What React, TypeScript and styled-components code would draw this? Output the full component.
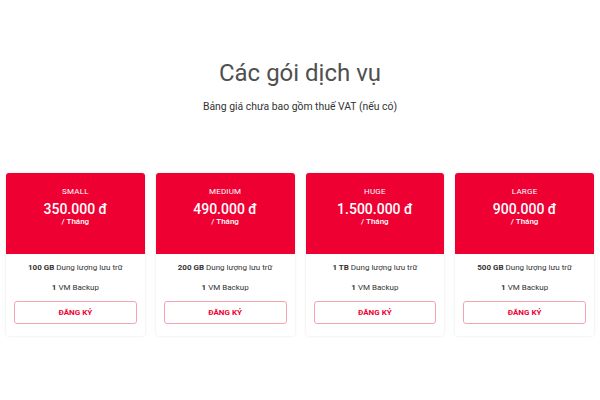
import React, { FC } from 'react';
import styled, { createGlobalStyle } from 'styled-components';

const GlobalStyle = createGlobalStyle`
    html, body {
        margin: 0;
        padding: 0;
        background: #ffffff;
        font-family: Roboto, 'Liberation Sans', sans-serif;
    }
    * {
        box-sizing: border-box;
    }
`;

const Page = styled.div`
    width: 600px;
    height: 400px;
    padding: 0 6px;
    display: flex;
    flex-direction: column;
    align-items: center;
`;

const Title = styled.h1`
    margin: 57px 0 0 0;
    font-size: 24px;
    line-height: 32px;
    font-weight: 400;
    color: #505050;
`;

const SubTitle = styled.p`
    margin: 11px 0 0 0;
    font-size: 10.4px;
    line-height: 14px;
    color: #333333;
`;

const Grid = styled.div`
    width: 100%;
    margin-top: 59px;
    display: grid;
    grid-template-columns: repeat(4, 1fr);
    gap: 11px;
`;

const Card = styled.div`
    background: #ffffff;
    border-radius: 3px;
    overflow: hidden;
    box-shadow: 0 0 3px rgba(0, 0, 0, 0.1);
    display: flex;
    flex-direction: column;
`;

const CardHead = styled.div`
    height: 81px;
    background: #ee0033;
    color: #ffffff;
    display: flex;
    flex-direction: column;
    align-items: center;
    padding-top: 14px;
`;

const PlanName = styled.span`
    font-size: 8px;
    line-height: 10px;
    letter-spacing: 0.2px;
`;

const Price = styled.span`
    margin-top: 4px;
    font-size: 14px;
    line-height: 16px;
    font-weight: 500;
`;

const Period = styled.span`
    font-size: 8px;
    line-height: 10px;
    font-weight: 500;
`;

const CardBody = styled.div`
    padding: 9px 8px 12px;
    display: flex;
    flex-direction: column;
    align-items: center;
`;

const Feature = styled.p`
    margin: 0 0 10px 0;
    font-size: 8px;
    line-height: 10px;
    color: #333333;

    b {
        font-weight: 700;
    }
`;

const Button = styled.button`
    width: 100%;
    height: 23px;
    margin-top: -2px;
    background: #ffffff;
    border: 1px solid #f5a3b3;
    border-radius: 3px;
    color: #ee0033;
    font-family: inherit;
    font-size: 8px;
    font-weight: 700;
    cursor: pointer;
`;

interface IPlan {
    name: string;
    price: string;
    storage: string;
}

const plans: IPlan[] = [
    { name: 'SMALL', price: '350.000 đ', storage: '100 GB' },
    { name: 'MEDIUM', price: '490.000 đ', storage: '200 GB' },
    { name: 'HUGE', price: '1.500.000 đ', storage: '1 TB' },
    { name: 'LARGE', price: '900.000 đ', storage: '500 GB' },
];

const PlanCard: FC<{ plan: IPlan }> = ({ plan }) => (
    <Card>
        <CardHead>
            <PlanName>{plan.name}</PlanName>
            <Price>{plan.price}</Price>
            <Period>/ Tháng</Period>
        </CardHead>
        <CardBody>
            <Feature>
                <b>{plan.storage}</b> Dung lượng lưu trữ
            </Feature>
            <Feature>
                <b>1</b> VM Backup
            </Feature>
            <Button>ĐĂNG KÝ</Button>
        </CardBody>
    </Card>
);

const App: FC = () => (
    <>
        <GlobalStyle />
        <Page>
            <Title>Các gói dịch vụ</Title>
            <SubTitle>Bảng giá chưa bao gồm thuế VAT (nếu có)</SubTitle>
            <Grid>
                {plans.map((p) => (
                    <PlanCard key={p.name} plan={p} />
                ))}
            </Grid>
        </Page>
    </>
);

export default App;
